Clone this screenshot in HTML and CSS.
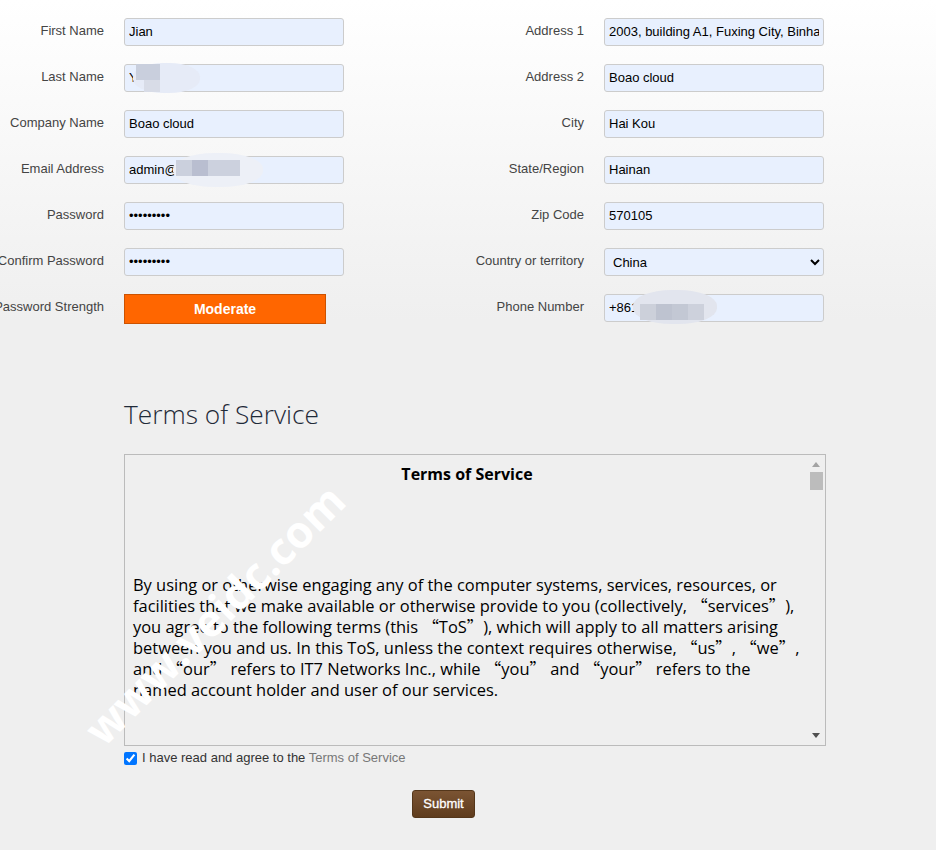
FILE: index.html
```html
<!DOCTYPE html>
<html lang="en">
<head>
<meta charset="utf-8">
<title>Register</title>
<link rel="stylesheet" href="styles.css">
</head>
<body>
<main class="page">
  <form class="signup">
    <div class="columns">
      <div class="column">
        <div class="row"><label class="label">First Name</label><input class="field" value="Jian"></div>
        <div class="row"><label class="label">Last Name</label><input class="field" value="Y"></div>
        <div class="row"><label class="label">Company Name</label><input class="field" value="Boao cloud"></div>
        <div class="row"><label class="label">Email Address</label><input class="field" value="admin@"></div>
        <div class="row"><label class="label">Password</label><input class="field" type="password" value="•••••••••"></div>
        <div class="row"><label class="label">Confirm Password</label><input class="field" type="password" value="•••••••••"></div>
        <div class="row"><label class="label">Password Strength</label><div class="strength">Moderate</div></div>
      </div>
      <div class="column">
        <div class="row"><label class="label">Address 1</label><input class="field" value="2003, building A1, Fuxing City, Binhai Avenue"></div>
        <div class="row"><label class="label">Address 2</label><input class="field" value="Boao cloud"></div>
        <div class="row"><label class="label">City</label><input class="field" value="Hai Kou"></div>
        <div class="row"><label class="label">State/Region</label><input class="field" value="Hainan"></div>
        <div class="row"><label class="label">Zip Code</label><input class="field" value="570105"></div>
        <div class="row"><label class="label">Country or territory</label><select class="field select"><option>China</option></select></div>
        <div class="row"><label class="label">Phone Number</label><input class="field" value="+861"></div>
      </div>
    </div>

    <section class="terms">
      <h2 class="terms-title">Terms of Service</h2>
      <div class="terms-box">
        <div class="terms-body">
          <h3 class="terms-heading">Terms of Service</h3>
          <p class="terms-text">By using or otherwise engaging any of the computer systems, services, resources, or facilities that we make available or otherwise provide to you (collectively, <span class="cjk" lang="zh-CN">“</span>services<span class="cjk" lang="zh-CN">”</span>), you agree to the following terms (this <span class="cjk" lang="zh-CN">“</span>ToS<span class="cjk" lang="zh-CN">”</span>), which will apply to all matters arising between you and us. In this ToS, unless the context requires otherwise, <span class="cjk" lang="zh-CN">“</span>us<span class="cjk" lang="zh-CN">”</span>, <span class="cjk" lang="zh-CN">“</span>we<span class="cjk" lang="zh-CN">”</span>, and <span class="cjk" lang="zh-CN">“</span>our<span class="cjk" lang="zh-CN">”</span> refers to IT7 Networks Inc., while <span class="cjk" lang="zh-CN">“</span>you<span class="cjk" lang="zh-CN">”</span> and <span class="cjk" lang="zh-CN">“</span>your<span class="cjk" lang="zh-CN">”</span> refers to the named account holder and user of our services.</p>
        </div>
        <div class="scrollbar">
          <span class="arrow arrow-up"></span>
          <span class="thumb"></span>
          <span class="arrow arrow-down"></span>
        </div>
      </div>
      <label class="agree"><input class="agree-box" type="checkbox" checked><span class="agree-text">I have read and agree to the <a class="agree-link">Terms of Service</a></span></label>
      <div class="actions"><button class="submit" type="button">Submit</button></div>
    </section>
  </form>

  <div class="smudge smudge-last"><i class="px px-l1"></i><i class="px px-l2"></i></div>
  <div class="smudge smudge-email"><i class="px px-e1"></i><i class="px px-e2"></i><i class="px px-e3"></i></div>
  <div class="smudge smudge-phone"><i class="px px-p1"></i><i class="px px-p2"></i><i class="px px-p3"></i><i class="px px-p4"></i></div>
  <div class="watermark">www.veidc.com</div>
</main>
</body>
</html>
```
FILE: styles.css
```css
* { box-sizing: border-box; }
html, body { margin: 0; padding: 0; }
body {
  height: 850px;
  overflow: hidden;
  background: linear-gradient(#ffffff 0, #efefef 320px, #efefef 100%);
  font-family: "Liberation Sans", Arial, sans-serif;
  font-size: 13px;
  color: #333;
}
.page { position: relative; height: 850px; overflow: hidden; }

.columns { display: grid; grid-template-columns: 480px 480px; padding-top: 18px; height: 324px; }
.column { display: flex; flex-direction: column; gap: 18px; }
.row { display: flex; align-items: flex-start; gap: 20px; height: 28px; }
.label {
  width: 104px;
  flex: none;
  display: flex;
  justify-content: flex-end;
  white-space: nowrap;
  line-height: 26px;
  color: #444;
}
.field {
  width: 220px;
  height: 28px;
  flex: none;
  padding: 0 4px 1px;
  border: 1.5px solid #ccc;
  border-radius: 3px;
  background: #e8f0fe;
  color: #000;
  font: 13px "Liberation Sans", Arial, sans-serif;
  outline: none;
}
.select { padding: 1px 4px 0; }
.strength {
  width: 202px;
  height: 30px;
  background: #ff6600;
  border: 1px solid #cc5200;
  color: #fff;
  font-size: 14px;
  font-weight: 700;
  text-align: center;
  line-height: 29px;
}

.terms { margin-left: 124px; width: 702px; }
.terms-title {
  margin: 0;
  padding-top: 71px;
  height: 130px;
  font: 300 26.3px/38px "Open Sans", sans-serif;
  color: #1f2a38;
}
.terms-box {
  position: relative;
  height: 292px;
  border: 1px solid #bbb;
  overflow: hidden;
}
.terms-body {
  padding: 9px 8px 0;
  width: 684px;
  font-family: "Open Sans", "Noto Sans CJK SC", sans-serif;
  color: #000;
  font-size: 16.45px;
  line-height: 21px;
  text-spacing-trim: space-all;
}
.terms-heading { margin: 0 0 89px; text-align: center; font-size: 16px; line-height: 21px; font-weight: 700; }
.terms-text { margin: 0; }
.cjk { font-family: "Noto Sans CJK SC", sans-serif; text-spacing-trim: space-all; }

.scrollbar { position: absolute; top: 0; right: 0; width: 17px; height: 100%; }
.arrow { position: absolute; left: 4px; width: 0; height: 0; border-left: 4px solid transparent; border-right: 4px solid transparent; }
.arrow-up { top: 7px; border-bottom: 5px solid #a3a3a3; }
.arrow-down { bottom: 7px; border-top: 5px solid #505050; }
.thumb { position: absolute; top: 17px; left: 2px; width: 13px; height: 18px; background: #bcbcbc; }

.agree { display: flex; align-items: center; gap: 5px; height: 24px; color: #333; }
.agree-box { width: 13px; height: 13px; margin: 0; flex: none; accent-color: #0075ff; }
.agree-text { padding-bottom: 2px; }
.agree-link { color: #777; }
.actions { display: flex; justify-content: center; padding-top: 20px; padding-right: 63px; }
.submit {
  width: 63px;
  height: 28px;
  padding: 0 0 2px;
  border: 1px solid #54361a;
  border-radius: 3px;
  background: linear-gradient(#7b5433, #5f3c1d);
  color: #fff;
  font: 13px "Liberation Sans", Arial, sans-serif;
  -webkit-text-stroke: 0.3px #fff;
}

/* Redaction smudges lying over the screenshot */
.smudge { position: absolute; border-radius: 46%; }
.smudge-last { left: 133px; top: 63px; width: 67px; height: 30px; background: #e6ebf7; }
.smudge-email { left: 173px; top: 153px; width: 90px; height: 34px; background: #edf0f7; }
.smudge-phone { left: 633px; top: 290px; width: 84px; height: 34px; background: #e2e5ee; }
.px { position: absolute; display: block; }
.px-l1 { left: 3px; top: 1px; width: 24px; height: 16px; background: #c9cfdd; }
.px-l2 { left: 11px; top: 17px; width: 16px; height: 12px; background: #d8dce7; }
.px-e1 { left: 3px; top: 7px; width: 16px; height: 16px; background: #cbd0dd; }
.px-e2 { left: 19px; top: 7px; width: 16px; height: 16px; background: #b9bed0; }
.px-e3 { left: 35px; top: 7px; width: 32px; height: 16px; background: #ccd1de; }
.px-p1 { left: 7px; top: 14px; width: 16px; height: 16px; background: #ccd0da; }
.px-p2 { left: 23px; top: 14px; width: 16px; height: 16px; background: #bec3d0; }
.px-p3 { left: 39px; top: 14px; width: 16px; height: 16px; background: #c3c8d4; }
.px-p4 { left: 55px; top: 14px; width: 16px; height: 16px; background: #cdd1dc; }

.watermark {
  position: absolute;
  left: 54px;
  top: 592px;
  transform: rotate(-45deg);
  width: 320px;
  display: flex;
  justify-content: center;
  color: #fff;
  font: 700 44px/44px "Open Sans", sans-serif;
  white-space: nowrap;
}
```
